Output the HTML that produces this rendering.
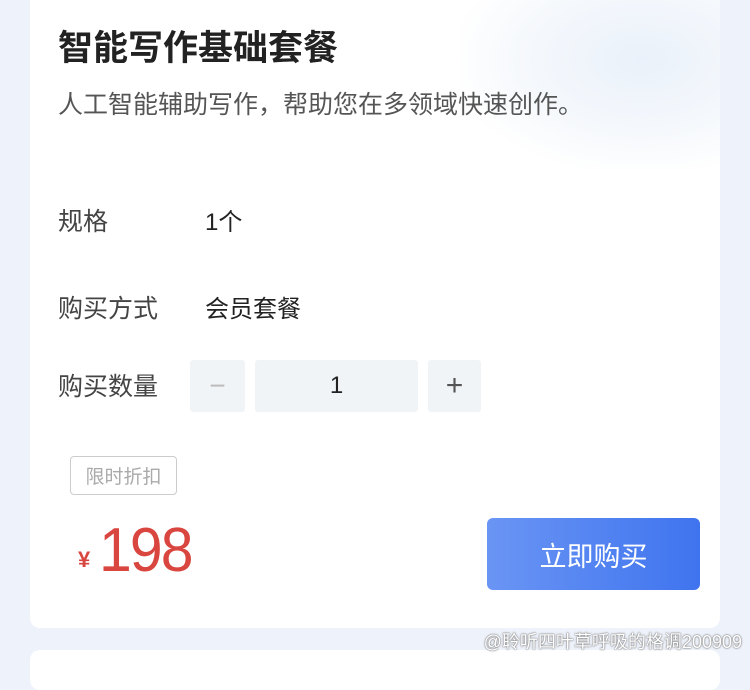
<!DOCTYPE html>
<html><head><meta charset="utf-8"><style>
*{margin:0;padding:0;box-sizing:border-box}
body{width:750px;height:661px;overflow:hidden;background:#eef2fa;font-family:"Liberation Sans","Noto Sans CJK SC",sans-serif;position:relative}
.card{position:absolute;left:30px;top:-10px;width:690px;height:638px;background:#fff;border-radius:10px}
.card2{position:absolute;left:30px;top:650px;width:690px;height:40px;background:#fff;border-radius:10px}
.deco{position:absolute;left:460px;top:0;width:260px;height:170px;background:radial-gradient(ellipse at 70% 35%,#eaf1fa 0%,#f5f8fc 45%,rgba(255,255,255,0) 75%)}
.abs{position:absolute;white-space:nowrap}
.t{left:58px;top:20px;font-size:35px;font-weight:bold;color:#222}
.s{left:58px;top:85px;font-size:25px;color:#555}
.l{font-size:25px;color:#444;left:58px}
.v{font-size:24px;color:#222;left:205px}
.box{position:absolute;background:#f1f4f7;border-radius:3px;top:360px;height:52px;display:flex;align-items:center;justify-content:center}
.badge{left:70px;top:456px;width:107px;height:39px;border:1.5px solid #ccc;border-radius:4px;color:#aaa;font-size:19px;display:flex;align-items:center;justify-content:center}
.btn{left:487px;top:518px;width:213px;height:72px;border-radius:6px;background:linear-gradient(90deg,#6a95f4,#3f74ef);color:#fff;font-size:27px;display:flex;align-items:center;justify-content:center}
.wm{right:8px;top:628px;font-size:18px;color:#fff;text-shadow:0 0 2px #777,0 0 1px #555}
</style></head><body>
<div class="card"></div>
<div class="card2"></div>
<div class="deco"></div>
<div class="abs t">智能写作基础套餐</div>
<div class="abs s">人工智能辅助写作，帮助您在多领域快速创作。</div>
<div class="abs l" style="top:202px">规格</div>
<div class="abs v" style="top:202px">1个</div>
<div class="abs l" style="top:289px">购买方式</div>
<div class="abs v" style="top:289px">会员套餐</div>
<div class="abs l" style="top:367px">购买数量</div>
<div class="box" style="left:190px;width:55px;color:#bbb;font-size:28px">−</div>
<div class="box" style="left:255px;width:163px;font-size:24px;color:#222">1</div>
<div class="box" style="left:428px;width:53px;color:#555;font-size:30px">+</div>
<div class="abs badge">限时折扣</div>
<div class="abs" style="left:78px;top:547px;font-size:22px;color:#d9453f;font-weight:bold">¥</div>
<div class="abs" style="left:99px;top:515px;font-size:62px;color:#d9453f;letter-spacing:-2px;transform:scaleX(0.95);transform-origin:left">198</div>
<div class="abs btn">立即购买</div>
<div class="abs wm">@聆听四叶草呼吸的格调200909</div>
</body></html>
